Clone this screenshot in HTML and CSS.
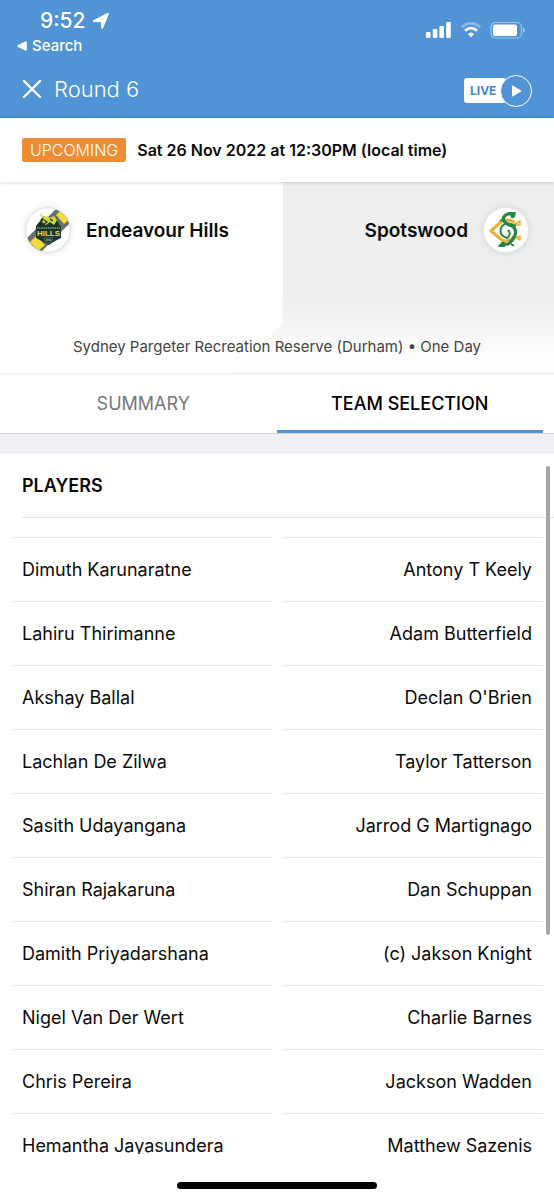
FILE: index.html
```
<!DOCTYPE html>
<html lang="en">
<head>
    <meta charset="UTF-8">
    <meta name="viewport" content="width=device-width, initial-scale=1.0">
    <title>Round 6 - Team Selection</title>
    <link rel="stylesheet" href="styles.css">
</head>
<body>

<!-- Status bar and title -->
<header class="top">
    <div class="status">
        <div class="status-left">
            <div class="clock">
                <span>9:52</span>
                <svg width="18" height="18" viewBox="0 0 18 18"><path d="M1.2 8.2 L15.3 1.1 Q17.3 .2 16.7 2.4 L11.2 16 Q10 18 9.2 16 L8.7 10 L2.2 10.2 Q0 9.8 1.2 8.2Z" fill="#fff"/></svg>
            </div>
            <a class="back" href="#">
                <svg width="10" height="10" viewBox="0 0 10 10"><path d="M.6 4.3 L8.6 .3 Q9.8 0 9.8 1.2 V8.8 Q9.8 10 8.6 9.7 L.6 5.7 Q-.4 5 .6 4.3Z" fill="#fff"/></svg>
                Search
            </a>
        </div>
        <div class="status-right">
            <svg width="26" height="18" viewBox="0 0 26 18" fill="#fff">
                <rect x="0" y="11" width="4.6" height="6" rx="1.3"/>
                <rect x="6.8" y="8" width="4.6" height="9" rx="1.3"/>
                <rect x="13.4" y="5" width="4.6" height="12" rx="1.3"/>
                <rect x="20.2" y="1" width="4.6" height="16" rx="1.3"/>
            </svg>
            <svg width="22" height="18" viewBox="0 0 22 18" fill="none" stroke="#fff">
                <path d="M1.8 6.3 C7 1 15 1 20.2 6.3" stroke-width="2.8" opacity=".35"/>
                <path d="M5 9.8 C8.6 6.4 13.4 6.4 17 9.8" stroke-width="2.8"/>
                <path d="M11 16.2 L7.8 13 Q11 10 14.2 13Z" fill="#fff" stroke="none"/>
            </svg>
            <svg width="36" height="18" viewBox="0 0 36 18">
                <rect x="1" y="1.5" width="30.5" height="15.5" rx="4.5" fill="none" stroke="#fff" stroke-opacity=".45" stroke-width="1.2"/>
                <rect x="3" y="3.6" width="24" height="11.4" rx="2.6" fill="#fff"/>
                <path d="M33 6.6 Q35 7.4 35 9.2 Q35 11 33 11.8Z" fill="#fff" opacity=".5"/>
            </svg>
        </div>
    </div>
    <div class="title-bar">
        <button class="close-btn" aria-label="Close">
            <svg width="20" height="20" viewBox="0 0 20 20"><path d="M2 2 L18 18 M18 2 L2 18" stroke="#fff" stroke-width="2.4" stroke-linecap="round"/></svg>
        </button>
        <h1>Round 6</h1>
        <button class="live-btn">
            <span class="live-label">LIVE</span>
            <span class="live-play">
                <svg width="11" height="12" viewBox="0 0 11 12"><path d="M1 .9 Q1 .2 1.8 .6 L10 5.4 Q10.8 6 10 6.6 L1.8 11.4 Q1 11.8 1 11.1Z" fill="#fff"/></svg>
            </span>
        </button>
    </div>
</header>

<!-- Match date -->
<div class="schedule">
    <span class="badge">UPCOMING</span>
    <span class="date">Sat 26 Nov 2022 at 12:30PM (local time)</span>
</div>

<!-- Teams and venue -->
<section class="match">
    <div class="teams">
        <div class="team">
            <svg class="logo" viewBox="0 0 46 46">
                <defs><clipPath id="circle"><circle cx="23" cy="23" r="22"/></clipPath></defs>
                <circle cx="23" cy="23" r="22.4" fill="#fff" stroke="#cfcbd6" stroke-width=".8"/>
                <g clip-path="url(#circle)">
                    <path d="M-4 37 L36 -3 L50 11 L10 51Z" fill="#66716a"/>
                    <path d="M31 8 L36 3 L45 12 L39 17Z" fill="#f2db3b"/>
                    <path d="M5 35 L11 29 L20 38 L13 44Z" fill="#f2db3b"/>
                </g>
                <path d="M11 19 L15 14 L18 9 L22 11 L31 11 L34 17 L36 20 L36 31 L30 34 L24 38 L17 34 L11 31Z" fill="#183728"/>
                <path d="M15 6 L19 10 L22 9 L25 11 L29 9 L32 13 L29 18 L25 15 L21 18 L17 15 L19 12 L16 10Z" fill="#d5d83a"/>
                <path d="M19 13 L22 15 L19 17 M25 12 L28 14" stroke="#183728" stroke-width="1.3" fill="none"/>
                <path d="M12 21 H35" stroke="#b9c5b8" stroke-width="1.2" stroke-dasharray="1.5 .7"/>
                <text class="logo-hills" x="23.5" y="29" text-anchor="middle">HILLS</text>
                <path d="M19 31 H28 L26 35 L23 36 L20 34Z" fill="#0c231b" stroke="#7d9187" stroke-width=".7"/>
                <path d="M21 33 H26" stroke="#d7ded9" stroke-width="1"/>
            </svg>
            <h2>Endeavour Hills</h2>
        </div>
        <div class="team away">
            <h2>Spotswood</h2>
            <svg class="logo" viewBox="0 0 46 46" fill="none" stroke-linejoin="round">
                <circle cx="23" cy="23" r="22.4" fill="#fff" stroke="#ddd" stroke-width=".6"/>
                <!-- gold ribbon -->
                <path d="M31 15 Q24 11 18 15 Q13 19 8 24 Q14 29 19 33 Q24 36 31 30" stroke="#e6b33c" stroke-width="3.2"/>
                <path d="M29 14 L33 17 L37 14 V18 H32 M29 32 L33 30 L37 33 V29 L32 31" stroke="#e6b33c" stroke-width="1.6"/>
                <!-- green ribbon -->
                <path d="M29 11 Q31 6 25 7 Q19 9 21 14 Q24 18 29 19 Q34 22 32 28 Q30 34 25 37 Q20 38 19 35" stroke="#288542" stroke-width="3.2"/>
                <path d="M33 19 Q22 13 18 21 Q16 29 24 31 Q29 27 25 23" stroke="#288542" stroke-width="2"/>
                <path d="M25 6 L32 6 L31 10 M20 12 L17 14 M20 36 L16 39 H22 M28 37 L31 39" stroke="#288542" stroke-width="1.8"/>
            </svg>
        </div>
    </div>
    <p class="venue">Sydney Pargeter Recreation Reserve (Durham) • One Day</p>
</section>

<nav class="tabs">
    <button class="tab">SUMMARY</button>
    <button class="tab active">TEAM SELECTION</button>
</nav>

<!-- Team lists -->
<main class="players">
    <h3>PLAYERS</h3>
    <div class="lists">
        <ul>
            <li>Dimuth Karunaratne</li>
            <li>Lahiru Thirimanne</li>
            <li>Akshay Ballal</li>
            <li>Lachlan De Zilwa</li>
            <li>Sasith Udayangana</li>
            <li>Shiran Rajakaruna</li>
            <li>Damith Priyadarshana</li>
            <li>Nigel Van Der Wert</li>
            <li>Chris Pereira</li>
            <li>Hemantha Jayasundera</li>
        </ul>
        <ul class="away-list">
            <li>Antony T Keely</li>
            <li>Adam Butterfield</li>
            <li>Declan O'Brien</li>
            <li>Taylor Tatterson</li>
            <li>Jarrod G Martignago</li>
            <li>Dan Schuppan</li>
            <li>(c) Jakson Knight</li>
            <li>Charlie Barnes</li>
            <li>Jackson Wadden</li>
            <li>Matthew Sazenis</li>
        </ul>
    </div>
    <div class="scroll-thumb"></div>
</main>

<footer class="home"><div class="home-bar"></div></footer>

</body>
</html>
```
FILE: styles.css
```
* {
    box-sizing: border-box;
}
body {
    margin: 0;
    height: 100vh;
    display: flex;
    flex-direction: column;
    font-family: Inter, "Liberation Sans", sans-serif;
    color: #0b0b0b;
    background-color: #fff;
}
h1, h2, h3, p, ul {
    margin: 0;
    padding: 0;
}
svg {
    display: block;
    flex-shrink: 0;
}
button {
    font-family: inherit;
    border: none;
    padding: 0;
    background: none;
    cursor: pointer;
}

/* top bar */
.top {
    background-color: #5094d6;
    color: #fff;
    border-bottom: 1px solid #4a89c8;
}
.status {
    display: flex;
    justify-content: space-between;
    height: 60px;
    padding: 8px 28px 0 17px;
}
.clock {
    display: flex;
    align-items: center;
    gap: 6px;
    padding-left: 23px;
    font-size: 21px;
    line-height: 26px;
    font-weight: 500;
}
.back {
    display: flex;
    align-items: center;
    gap: 5px;
    color: #fff;
    font-size: 15px;
    line-height: 24px;
    font-weight: 500;
    text-decoration: none;
}
.status-right {
    display: flex;
    gap: 8px;
    padding-top: 13px;
}
.title-bar {
    display: flex;
    align-items: center;
    height: 57px;
    padding: 0 22px;
}
.title-bar h1 {
    flex: 1;
    margin-left: 12px;
    font-size: 22px;
    font-weight: 300;
}
.live-btn {
    display: flex;
    align-items: center;
    padding-top: 4px;
}
.live-label {
    width: 42px;
    height: 25px;
    padding-left: 6px;
    border-radius: 3px;
    background-color: #fff;
    color: #4488cb;
    font-size: 12px;
    line-height: 25px;
    font-weight: 700;
    text-align: left;
}
.live-play {
    display: flex;
    align-items: center;
    justify-content: center;
    width: 32px;
    height: 32px;
    margin-left: -6px;
    border: 1px solid #fff;
    border-radius: 50%;
    background-color: #5094d6;
}

/* date strip */
.schedule {
    display: flex;
    align-items: center;
    gap: 11px;
    height: 64px;
    padding: 0 22px;
    background-color: #fff;
    box-shadow: 0 1px 4px rgba(0, 0, 0, 0.15);
    z-index: 1;
}
.badge {
    padding: 0 8px;
    border-radius: 2px;
    background-color: #ec8d36;
    color: #fff;
    font-size: 16px;
    line-height: 24px;
    font-weight: 300;
}
.date {
    font-size: 16px;
    font-weight: 600;
}

/* match panel */
.match {
    position: relative;
    display: flex;
    flex-direction: column;
    justify-content: space-between;
    height: 192px;
    padding: 25px 25px 16px;
    border-bottom: 1px solid #eee;
}
.match::before {
    content: "";
    position: absolute;
    inset: 0 0 0 40%;
    background: linear-gradient(#eee 60%, #fdfdfd 92%);
    clip-path: polygon(18.4% 0, 100% 0, 100% 100%, 3% 100%, 18.4% 74%);
}
.teams {
    position: relative;
    display: flex;
    justify-content: space-between;
}
.team {
    display: flex;
    align-items: center;
    gap: 15px;
}
.team h2 {
    font-size: 19px;
    font-weight: 600;
}
.logo {
    width: 46px;
    height: 46px;
    border-radius: 50%;
    box-shadow: 0 0 6px rgba(0, 0, 0, 0.12);
}
.logo-hills {
    font: 900 8px "Liberation Sans", sans-serif;
    fill: #e5dd40;
}
.venue {
    position: relative;
    color: #444;
    font-size: 15px;
    line-height: 20px;
    text-align: center;
}

/* tabs */
.tabs {
    display: flex;
    height: 60px;
    padding: 0 11px 0 10px;
    border-bottom: 1px solid #d6d6d9;
    flex-shrink: 0;
}
.tab {
    flex: 1;
    padding-top: 2px;
    border-bottom: 3px solid transparent;
    color: #777;
    font-size: 18px;
}
.tab.active {
    border-bottom-color: #5094d6;
    color: #000;
    font-weight: 500;
}

/* player lists */
.players {
    position: relative;
    flex: 1;
    min-height: 0;
    overflow: hidden;
    border-top: 20px solid #f0f0f5;
}
.players h3 {
    margin-left: 22px;
    padding-top: 1px;
    border-bottom: 1px solid #e6e6e6;
    font-size: 18px;
    line-height: 62px;
    font-weight: 600;
}
.lists {
    display: grid;
    grid-template-columns: 1fr 1fr;
    gap: 10px;
    padding: 19px 11px 0;
}
.lists ul {
    list-style: none;
}
.lists li {
    padding: 0 11px;
    border-top: 1px solid #e8e8e8;
    font-size: 18px;
    line-height: 63px;
    white-space: nowrap;
}
.away-list {
    text-align: right;
}
.scroll-thumb {
    position: absolute;
    top: 12px;
    right: 4px;
    width: 4px;
    height: 67%;
    border-radius: 2px;
    background-color: #a5a5a5;
}

/* home indicator */
.home {
    display: flex;
    justify-content: center;
    height: 46px;
    padding-top: 28px;
    flex-shrink: 0;
}
.home-bar {
    width: 36%;
    height: 7px;
    border-radius: 4px;
    background-color: #000;
}
```
